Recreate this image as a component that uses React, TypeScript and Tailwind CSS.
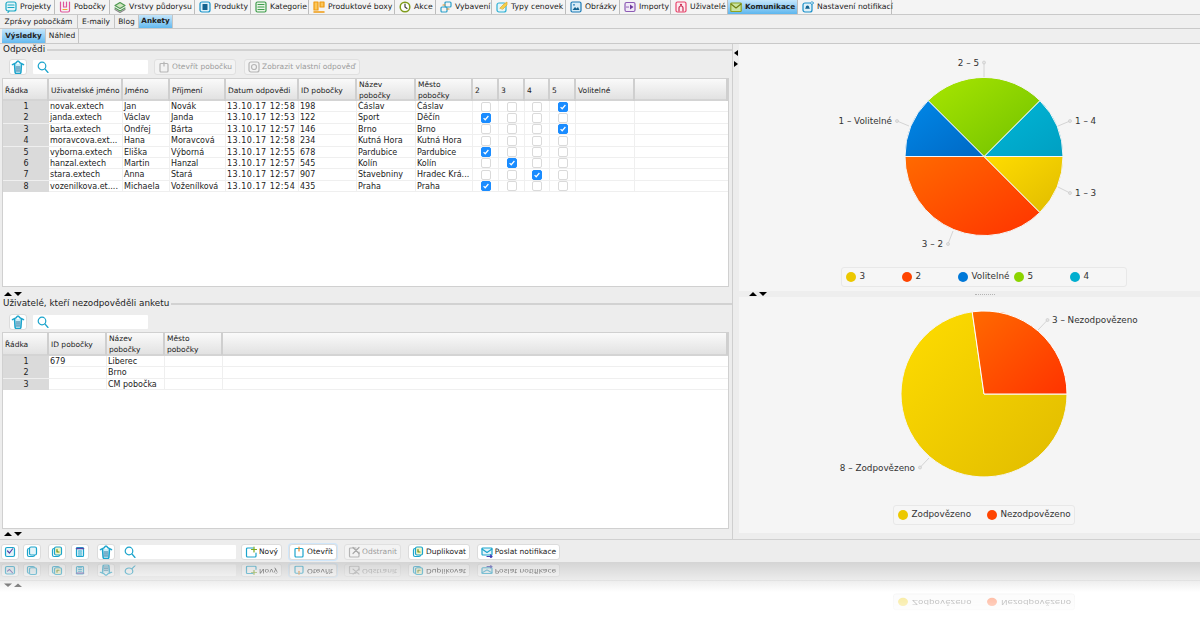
import type { ReactNode } from "react";

const answerCols = "grid grid-cols-[46px_74px_47px_56px_73px_58px_59px_57px_26px_26px_25px_26px_59px_1fr]";
const missingCols = "grid grid-cols-[46px_58px_58px_58px_1fr]";

const answers = [
  ["1", "novak.extech", "Jan", "Novák", "13.10.17 12:58", "198", "Čáslav", "Čáslav", 5],
  ["2", "janda.extech", "Václav", "Janda", "13.10.17 12:53", "122", "Sport", "Děčín", 2],
  ["3", "barta.extech", "Ondřej", "Bárta", "13.10.17 12:57", "146", "Brno", "Brno", 5],
  ["4", "moravcova.ext...", "Hana", "Moravcová", "13.10.17 12:58", "234", "Kutná Hora", "Kutná Hora", 0],
  ["5", "vyborna.extech", "Eliška", "Výborná", "13.10.17 12:55", "678", "Pardubice", "Pardubice", 2],
  ["6", "hanzal.extech", "Martin", "Hanzal", "13.10.17 12:57", "545", "Kolín", "Kolín", 3],
  ["7", "stara.extech", "Anna", "Stará", "13.10.17 12:57", "907", "Stavebniny", "Hradec Krá...", 4],
  ["8", "vozenilkova.et....", "Michaela", "Voženílková", "13.10.17 12:54", "435", "Praha", "Praha", 2],
] as const;

const missing = [
  ["1", "679", "Liberec", ""],
  ["2", "", "Brno", ""],
  ["3", "", "CM pobočka", ""],
];

function Glyph({ children, className = "w-3 h-3" }: { children: ReactNode; className?: string }) {
  return (
    <svg viewBox="0 0 12 12" fill="none" strokeWidth="1.2" strokeLinecap="round" strokeLinejoin="round" className={"shrink-0 " + className}>
      {children}
    </svg>
  );
}

const topTabs = [
  { label: "Projekty", w: "w-[54px]", icon: <><rect x="1" y="1" width="10" height="9" rx="2" fill="#e3f5f9" stroke="#1aa7c4" /><path d="M3 4h6M3 6.500h6" stroke="#1aa7c4" /><path d="M4 10l-1 1.500" stroke="#1aa7c4" /></> },
  { label: "Pobočky", w: "w-[55px]", icon: <><path d="M1.500 1v8.500a1.500 1.500 0 0 0 1.500 1.500h6a1.500 1.500 0 0 0 1.500-1.500V1" stroke="#e0559b" /><path d="M4.500 1v5h3V1" stroke="#e0559b" /><path d="M4 8.500h4" stroke="#f2a33a" /></> },
  { label: "Vrstvy půdorysu", w: "w-[85px]", icon: <><path d="M6 1.500l5 3-5 3-5-3z" fill="#cfe6c0" stroke="#4f9a52" /><path d="M1 7l5 3 5-3" stroke="#4f9a52" /><path d="M1 8.500l5 3 5-3" stroke="#8a8a8a" /></> },
  { label: "Produkty", w: "w-[56px]", icon: <><rect x="1" y="1" width="10" height="10" rx="2" fill="#e0f1f8" stroke="#1a93c9" /><rect x="3.500" y="3" width="5" height="6" rx="0.500" fill="#14628f" /></> },
  { label: "Kategorie", w: "w-[58px]", icon: <><rect x="1" y="1" width="10" height="10" rx="1.500" fill="#e9f5e7" stroke="#3f9c4c" /><path d="M3 3.500h6M3 6h6M3 8.500h6" stroke="#3f9c4c" /></> },
  { label: "Produktové boxy", w: "w-[86px]", icon: <><rect x="1" y="1" width="4" height="8" fill="#fbc65a" stroke="#ef9a10" /><rect x="7" y="1" width="4" height="5" fill="#fbc65a" stroke="#ef9a10" /><path d="M1 11h10" stroke="#ef9a10" strokeWidth="1.500" /></> },
  { label: "Akce", w: "w-[41px]", icon: <><circle cx="6" cy="6" r="4.800" fill="#fff" stroke="#7f9c1c" strokeWidth="1.500" /><path d="M6 3v3l2 1.500" stroke="#444" /></> },
  { label: "Vybavení", w: "w-[56px]", icon: <><rect x="5" y="1" width="6" height="5" rx="1" stroke="#2a9fc9" /><rect x="1" y="6" width="6" height="5" rx="1" stroke="#2a9fc9" /><path d="M3 4h2M9 8H7" stroke="#d98f2b" /></> },
  { label: "Typy cenovek", w: "w-[74px]", icon: <><rect x="1" y="2" width="9" height="9" rx="2" fill="#e3f5f9" stroke="#2fb0d4" /><path d="M4 7l4-4 3-2v3L7 8z" fill="#f5cf4c" stroke="#e0a928" strokeWidth="0.700" /></> },
  { label: "Obrázky", w: "w-[54px]", icon: <><rect x="1" y="1" width="10" height="10" rx="1.500" fill="#d8ecf7" stroke="#1979b5" /><path d="M2.500 9l2.500-3 1.500 1.500L8 6l1.500 3z" fill="#14628f" /><circle cx="4" cy="3.800" r="0.900" fill="#1979b5" /></> },
  { label: "Importy", w: "w-[51px]", icon: <><rect x="1" y="1.500" width="10" height="9" rx="1.500" fill="#f1e9f7" stroke="#8d5bb5" /><path d="M6 3.500l3.500 2.500L6 8.500z" fill="#6d3a9c" /><path d="M2.500 6h2" stroke="#8d5bb5" strokeDasharray="0.800 0.800" /></> },
  { label: "Uživatelé", w: "w-[57px]", icon: <><rect x="1" y="1" width="10" height="10" rx="1.500" fill="#fdeaef" stroke="#e8436b" /><circle cx="6" cy="3.800" r="1.100" fill="#c92b52" /><path d="M4 10V7a2 2 0 0 1 4 0v3" stroke="#c92b52" /></> },
  { label: "Komunikace", w: "w-[70px]", active: true, icon: <><rect x="0.800" y="2" width="10.400" height="8.500" rx="0.800" fill="#c9e4a0" stroke="#8ea21f" /><path d="M1 3l5 4 5-4" stroke="#6f7f12" /></> },
  { label: "Nastavení notifikací", w: "w-[94px]", icon: <><rect x="1" y="2" width="9" height="9" rx="2" fill="#e0f1f8" stroke="#1a8fc9" /><path d="M5.500 4.500c1.300 0 1.800 1 1.800 2.300l.7 1H3l.7-1c0-1.300.5-2.300 1.800-2.300z" fill="#14628f" /><circle cx="10" cy="2" r="1.300" fill="#fff" stroke="#1a8fc9" strokeWidth="0.700" /></> },
];

function MainTabs() {
  return (
    <div className="flex h-[15px] pl-[1px] bg-[#f4f4f4] border-b border-[#c9c9c9]">
      {topTabs.map((t) => (
        <div
          key={t.label}
          className={
            "flex items-center gap-[3px] border-r border-[#bdbdbd] whitespace-nowrap " +
            t.w +
            (t.active ? " pl-[2px] text-[7.3px] bg-gradient-to-b from-[#c4e6fb] to-[#5cb6ee] font-bold" : " pl-[4px] text-[7.7px]")
          }
        >
          <Glyph>{t.icon}</Glyph>
          <span>{t.label}</span>
        </div>
      ))}
    </div>
  );
}

function SubTabs({ items, active, className }: { items: { label: string; w: string }[]; active: string; className: string }) {
  return (
    <div className={"flex bg-[#efefef] border-b border-[#c9c9c9] " + className}>
      {items.map((t) => (
        <div
          key={t.label}
          className={
            "flex items-center justify-center whitespace-nowrap border-r border-[#c4c4c4] " +
            t.w +
            (t.label === active ? " text-[7.2px] bg-gradient-to-b from-[#c4e6fb] to-[#62b9ef] font-bold" : " text-[7.5px]")
          }
        >
          {t.label}
        </div>
      ))}
    </div>
  );
}

function Basket() {
  return (
    <Glyph className="w-[14px] h-[14px]">
      <path d="M3 3.500l.5 7a1 1 0 0 0 1 1h3a1 1 0 0 0 1-1l.5-7" stroke="#1ba4cc" strokeWidth="1.300" fill="#cdeef8" />
      <path d="M1.200 4l3-1.500L5.500 1h1l1.300 1.500 3 1.500" stroke="#1ba4cc" />
      <path d="M4.500 6h3M4.500 7.700h3M4.500 9.400h3" stroke="#1f6f99" strokeWidth="0.800" />
    </Glyph>
  );
}

function IconButton({ children, className = "w-[18px]" }: { children: ReactNode; className?: string }) {
  return (
    <div className={"flex items-center justify-center h-[16px] text-[7.5px] bg-white rounded-[3px] border border-[#dcdcdc] " + className}>
      {children}
    </div>
  );
}

function Search({ className }: { className: string }) {
  return (
    <div className={"flex items-center h-[14px] pl-[4px] bg-white rounded-[1px] " + className}>
      <svg viewBox="0 0 12 12" className="w-[12px] h-[12px]" fill="none" stroke="#1ba4cc" strokeWidth="1.200">
        <circle cx="5" cy="5" r="3.800" />
        <path d="M8 8l3 3.500" strokeLinecap="round" />
      </svg>
    </div>
  );
}

function GroupTitle({ title }: { title: string }) {
  return (
    <div className="flex items-center h-[12px] pl-[3px] text-[8.8px]">
      <span className="pr-[2px]">{title}</span>
      <div className="flex-1 h-[2px] bg-[#d2d2d2]" />
    </div>
  );
}

function HeaderCell({ children }: { children?: ReactNode }) {
  return (
    <div className="flex items-center pl-[2px] text-[7.5px] leading-[11px] border-r-2 border-[#cfcfcf] whitespace-pre-line">
      {children}
    </div>
  );
}

function Check({ on }: { on: boolean }) {
  return (
    <div
      className={
        "flex items-center justify-center w-[10px] h-[10px] rounded-[2px] border " +
        (on ? "bg-[#1a8cff] border-[#1a8cff]" : "bg-white border-[#dadada]")
      }
    >
      {on && (
        <svg viewBox="0 0 10 10" className="w-[8px] h-[8px]" fill="none" stroke="#fff" strokeWidth="1.500">
          <path d="M2 5.200l2 2L8 2.500" />
        </svg>
      )}
    </div>
  );
}

function Cell({ children, last, className = "" }: { children?: ReactNode; last?: boolean; className?: string }) {
  return (
    <div className={"pl-[1px] truncate leading-[11px] " + (last ? "" : "border-r border-[#efefef] ") + className}>{children}</div>
  );
}

function AnswersTable() {
  return (
    <div className="flex-1 ml-[2px] mr-[3px] bg-white border border-[#d0d0d0]">
      <div className={answerCols + " h-[22px] bg-gradient-to-b from-[#fafafa] to-[#e2e2e2] border-b-2 border-[#d4d4d4]"}>
        {["Řádka", "Uživatelské jméno", "Jméno", "Příjmení", "Datum odpovědi", "ID pobočky", "Název\npobočky", "Město\npobočky", "2", "3", "4", "5", "Volitelné", ""].map((h, i) => (
          <HeaderCell key={i}>{h}</HeaderCell>
        ))}
      </div>
      {answers.map((r) => (
        <div key={r[0]} className={answerCols + " h-[11.4px] border-b border-[#efefef]"}>
          <div className="bg-[#dadada] text-center leading-[11px]">{r[0]}</div>
          {r.slice(1, 8).map((v, i) => (
            <Cell key={i} className={i === 3 ? "tracking-[0.5px]" : ""}>{v}</Cell>
          ))}
          {[2, 3, 4, 5].map((n) => (
            <div key={n} className="flex items-center justify-center border-r border-[#efefef]">
              <Check on={r[8] === n} />
            </div>
          ))}
          <Cell />
          <Cell last />
        </div>
      ))}
    </div>
  );
}

function MissingTable() {
  return (
    <div className="flex-1 ml-[2px] mr-[3px] bg-white border border-[#d0d0d0]">
      <div className={missingCols + " h-[23px] bg-gradient-to-b from-[#fafafa] to-[#e2e2e2] border-b-2 border-[#d4d4d4]"}>
        {["Řádka", "ID pobočky", "Název\npobočky", "Město\npobočky", ""].map((h, i) => (
          <HeaderCell key={i}>{h}</HeaderCell>
        ))}
      </div>
      {missing.map((r) => (
        <div key={r[0]} className={missingCols + " h-[11.4px] border-b border-[#efefef]"}>
          <div className="bg-[#dadada] text-center leading-[11px]">{r[0]}</div>
          {r.slice(1).map((v, i) => (
            <Cell key={i}>{v}</Cell>
          ))}
          <Cell last />
        </div>
      ))}
    </div>
  );
}

function DisabledButton({ label, className, icon }: { label: string; className: string; icon: ReactNode }) {
  return (
    <div className={"flex items-center gap-[2px] h-[16px] pl-[3px] text-[7.5px] rounded-[3px] bg-[#f3f3f3] border border-[#e0e0e0] text-[#9c9c9c] " + className}>
      {icon}
      <span className="whitespace-nowrap">{label}</span>
    </div>
  );
}

function VerticalArrows() {
  return (
    <div className="flex gap-[2px] pl-[4px] items-center">
      <div className="w-0 h-0 border-x-[4px] border-x-transparent border-b-[4px] border-b-black" />
      <div className="w-0 h-0 border-x-[4px] border-x-transparent border-t-[4px] border-t-black" />
    </div>
  );
}

function LeftColumn() {
  return (
    <div className="flex flex-col w-[733px] h-full border-r border-[#cfcfcf]">
      <div className="flex flex-col h-[246px]">
        <GroupTitle title="Odpovědi" />
        <div className="flex items-center h-[18px] mt-[2px] pl-[9px] mb-[2px]">
          <IconButton><Basket /></IconButton>
          <Search className="w-[115px] ml-[6px]" />
          <DisabledButton
            label="Otevřít pobočku"
            className="w-[82px] ml-[6px]"
            icon={<Glyph><path d="M3 2.500h6a1 1 0 0 1 1 1V10a1 1 0 0 1-1 1H3a1 1 0 0 1-1-1V3.500a1 1 0 0 1 1-1z" stroke="#b5b5b5" /><path d="M6 1v4" stroke="#b5b5b5" /></Glyph>}
          />
          <DisabledButton
            label="Zobrazit vlastní odpověď"
            className="w-[116px] ml-[8px]"
            icon={<Glyph><rect x="1" y="1" width="10" height="10" rx="2" stroke="#b5b5b5" /><circle cx="6" cy="6" r="2.500" stroke="#b5b5b5" /></Glyph>}
          />
        </div>
        <div className="flex flex-col flex-1 mb-[3px]">
          <AnswersTable />
        </div>
      </div>
      <div className="flex h-[8px]">
        <VerticalArrows />
      </div>
      <GroupTitle title="Uživatelé, kteří nezodpověděli anketu" />
      <div className="flex items-center h-[20px] mt-[2px] pl-[9px]">
        <IconButton><Basket /></IconButton>
        <Search className="w-[115px] ml-[6px]" />
      </div>
      <div className="flex flex-col flex-1">
        <MissingTable />
      </div>
      <div className="flex h-[10px] items-center">
        <VerticalArrows />
      </div>
    </div>
  );
}

function Gradients({ id }: { id: string }) {
  const stops: [string, string, string][] = [
    ["y", "#ffdd00", "#e0bb00"],
    ["o", "#ff6a00", "#ff3300"],
    ["b", "#0088e8", "#0068c4"],
    ["g", "#a8e600", "#70c000"],
    ["t", "#00b8d8", "#009fc2"],
  ];
  return (
    <defs>
      {stops.map(([k, a, b]) => (
        <linearGradient key={k} id={id + k} x1="0" y1="0" x2="1" y2="1">
          <stop offset="0" stopColor={a} />
          <stop offset="1" stopColor={b} />
        </linearGradient>
      ))}
    </defs>
  );
}

function Leader({ points, dot }: { points: string; dot: [number, number] }) {
  return (
    <g>
      <polyline points={points} fill="none" stroke="#d4d4d4" />
      <circle cx={dot[0]} cy={dot[1]} r="1.500" fill="#e4e4e4" stroke="#c4c4c4" strokeWidth="0.600" />
    </g>
  );
}

function ChartText({ x, y, end, children }: { x: number; y: number; end?: boolean; children: string }) {
  return (
    <text x={x} y={y} dominantBaseline="central" textAnchor={end ? "end" : "start"} fill="#333" fontSize="8.8">
      {children}
    </text>
  );
}

function TopPie() {
  return (
    <svg viewBox="768 44 432 223" className="w-[432px] h-[223px] shrink-0">
      <Gradients id="a" />
      <g stroke="#f5f5f5" strokeWidth="1">
        <path d="M984 156.500H905A79 79 0 0 0 1039.900 212.400Z" fill="url(#ao)" />
        <path d="M984 156.500L1039.900 212.400A79 79 0 0 0 1063 156.500Z" fill="url(#ay)" />
        <path d="M984 156.500H1063A79 79 0 0 0 1039.900 100.600Z" fill="url(#at)" />
        <path d="M984 156.500L1039.900 100.600A79 79 0 0 0 928.100 100.600Z" fill="url(#ag)" />
        <path d="M984 156.500L928.100 100.600A79 79 0 0 0 905 156.500Z" fill="url(#ab)" />
      </g>
      <Leader points="984,77 984,63" dot={[984, 62.5]} />
      <ChartText x={979} y={63} end>2 – 5</ChartText>
      <Leader points="909,126 897,121" dot={[897, 121]} />
      <ChartText x={892} y={121} end>1 – Volitelné</ChartText>
      <Leader points="1058,126 1070,121" dot={[1070, 121]} />
      <ChartText x={1075} y={121}>1 – 4</ChartText>
      <Leader points="1058,187 1070,193" dot={[1070, 193]} />
      <ChartText x={1075} y={193}>1 – 3</ChartText>
      <Leader points="953,231 948,244" dot={[948, 244]} />
      <ChartText x={943} y={244} end>3 – 2</ChartText>
    </svg>
  );
}

function BottomPie() {
  return (
    <svg viewBox="768 297 432 208" className="w-[432px] h-[208px] shrink-0">
      <Gradients id="c" />
      <path d="M984 394H1067A83 83 0 1 1 972.200 311.800Z" fill="url(#cy)" stroke="#f5f5f5" />
      <path d="M984 394L972.200 311.800A83 83 0 0 1 1067 394Z" fill="url(#co)" stroke="#fff" />
      <Leader points="1038,330 1047.500,320" dot={[1047.5, 320]} />
      <ChartText x={1052} y={320}>3 – Nezodpovězeno</ChartText>
      <Leader points="929,458 920,467.500" dot={[920, 467.5]} />
      <ChartText x={915} y={468} end>8 – Zodpovězeno</ChartText>
    </svg>
  );
}

function ChartLegend({ items, className, itemClass }: { items: [string, string][]; className: string; itemClass: string }) {
  return (
    <div className={"flex items-center h-[20px] pl-[4px] rounded-[3px] border border-[#e8e8e8] bg-[#f6f6f6] text-[8.8px] text-[#333] " + className}>
      {items.map(([label, color]) => (
        <div key={label} className={"flex items-center gap-[4px] " + itemClass}>
          <span className={"w-[10px] h-[10px] rounded-full " + color} />
          <span>{label}</span>
        </div>
      ))}
    </div>
  );
}

const surveyLegend: [string, string][] = [
  ["3", "bg-[#ecc800]"],
  ["2", "bg-[#ff4400]"],
  ["Volitelné", "bg-[#0078d8]"],
  ["5", "bg-[#8cd400]"],
  ["4", "bg-[#00aecf]"],
];

const answeredLegend: [string, string][] = [
  ["Zodpovězeno", "bg-[#ecc800]"],
  ["Nezodpovězeno", "bg-[#ff4400]"],
];

function AnsweredLegend() {
  return <ChartLegend items={answeredLegend} className="w-[182px]" itemClass="w-[89px] last:w-auto" />;
}

function RightColumn() {
  return (
    <div className="flex flex-col flex-1 h-full">
      <div className="flex flex-col items-center h-[247px] pl-[28px] bg-[#f5f5f5]">
        <TopPie />
        <ChartLegend items={surveyLegend} className="w-[286px]" itemClass="w-[56px]" />
      </div>
      <div className="flex items-center h-[6px] pl-[6px] bg-[#eeeeee]">
        <VerticalArrows />
        <div className="ml-[208px] w-[20px] border-t border-dotted border-[#b4b4b4]" />
      </div>
      <div className="flex flex-col items-center h-[236px] pl-[28px] bg-[#f5f5f5]">
        <BottomPie />
        <AnsweredLegend />
      </div>
    </div>
  );
}

function Gutter() {
  return (
    <div className="flex flex-col items-center gap-[5px] w-[6px] pt-[6px]">
      <div className="w-0 h-0 border-y-[3.5px] border-y-transparent border-r-[4px] border-r-black" />
      <div className="w-0 h-0 border-y-[3.5px] border-y-transparent border-l-[4px] border-l-black" />
    </div>
  );
}

function Footer() {
  return (
    <div className="flex items-center h-[23px] pl-[1px] pt-[2px] bg-[#ededed] border-t border-[#d0d0d0]">
      <IconButton>
        <Glyph><rect x="1.500" y="1.500" width="9" height="9" rx="1.500" fill="#e4f4f9" stroke="#1ba4cc" /><path d="M3.500 5l2 2 3-4" stroke="#5a43a8" /></Glyph>
      </IconButton>
      <IconButton className="w-[18px] ml-[4px]">
        <Glyph><rect x="1.500" y="2.500" width="7" height="8" rx="1.500" stroke="#1ba4cc" /><rect x="3.500" y="1" width="7" height="8" rx="1.500" fill="#e4f4f9" stroke="#1ba4cc" /></Glyph>
      </IconButton>
      <IconButton className="w-[18px] ml-[7px]">
        <Glyph><rect x="1.500" y="2.500" width="7" height="8" rx="1.500" stroke="#1ba4cc" /><rect x="3.500" y="1" width="7" height="8" rx="1.500" fill="#f0f6c8" stroke="#1ba4cc" /><path d="M6 3.500v2.500h2" stroke="#6a8a14" /></Glyph>
      </IconButton>
      <IconButton className="w-[18px] ml-[5px]">
        <Glyph><rect x="2.500" y="1.500" width="7" height="9" rx="1" fill="#e4f4f9" stroke="#1ba4cc" /><path d="M2.500 2.500h7" stroke="#5a43a8" strokeWidth="1.500" /><path d="M4.500 5h3M4.500 7h3M4.500 9h3" stroke="#1ba4cc" /></Glyph>
      </IconButton>
      <IconButton className="w-[18px] ml-[8px]"><Basket /></IconButton>
      <Search className="w-[116px] ml-[5px]" />
      <IconButton className="w-[41px] ml-[5px] gap-[2px]">
        <Glyph><path d="M8 2H2.500a1 1 0 0 0-1 1v7a1 1 0 0 0 1 1H10a1 1 0 0 0 1-1V7" stroke="#1ba4cc" /><path d="M9 1v5M6.500 3.500h5" stroke="#7ba81c" strokeWidth="1.200" /></Glyph>
        <span>Nový</span>
      </IconButton>
      <IconButton className="w-[48px] ml-[7px] gap-[2px] border-[#7fbdf0] shadow-[0_0_0_1px_#cfe6fa]">
        <Glyph><path d="M3 2.500h6a1 1 0 0 1 1 1V10a1 1 0 0 1-1 1H3a1 1 0 0 1-1-1V3.500a1 1 0 0 1 1-1z" stroke="#1ba4cc" /><path d="M6 1v4" stroke="#ef8a24" strokeWidth="1.200" /></Glyph>
        <span>Otevřít</span>
      </IconButton>
      <DisabledButton
        label="Odstranit"
        className="w-[57px] ml-[7px]"
        icon={<Glyph><path d="M8 2H2.500a1 1 0 0 0-1 1v7a1 1 0 0 0 1 1H10a1 1 0 0 0 1-1V6" stroke="#b5b5b5" /><path d="M5 1.500l6 6M11 1.500l-6 6" stroke="#a8a8a8" /></Glyph>}
      />
      <IconButton className="w-[62px] ml-[7px] gap-[2px]">
        <Glyph><rect x="1.500" y="2.500" width="7" height="8" rx="1.500" stroke="#1ba4cc" /><rect x="3.500" y="1" width="7" height="8" rx="1.500" fill="#f0f6c8" stroke="#1ba4cc" /><path d="M6 3.500v2.500h2" stroke="#6a8a14" /></Glyph>
        <span>Duplikovat</span>
      </IconButton>
      <IconButton className="w-[83px] ml-[7px] gap-[2px]">
        <Glyph><rect x="1" y="2" width="10" height="7" rx="0.800" fill="#e4f4f9" stroke="#1ba4cc" /><path d="M1 3l5 3.500L11 3" stroke="#1ba4cc" /><path d="M6 10.500h5M9.500 9l1.500 1.500L9.500 12" stroke="#3f3fb5" /></Glyph>
        <span className="whitespace-nowrap">Poslat notifikace</span>
      </IconButton>
    </div>
  );
}

function Reflection() {
  return (
    <div className="relative flex-1 overflow-hidden bg-white">
      <div className="absolute top-0 inset-x-0 h-[18px] bg-gradient-to-b from-[#bcbcbc] to-[#ececec]" />
      <div className="absolute top-[18px] inset-x-0 h-[12px] bg-gradient-to-b from-[#ececec] to-white" />
      <div className="absolute inset-0 [mask-image:linear-gradient(to_bottom,black,black_30%,transparent)] opacity-50">
        <div className="absolute left-0 bottom-full w-[1200px] origin-bottom [transform:scaleY(-0.83)] flex flex-col" aria-hidden="true">
          <div className="flex h-[40px]">
            <div className="flex flex-col w-[733px]">
              <div className="flex-1" />
              <div className="flex h-[10px] items-center">
                <VerticalArrows />
              </div>
            </div>
            <div className="flex flex-col items-center flex-1 pl-[35px] pt-[5px]">
              <AnsweredLegend />
            </div>
          </div>
          <Footer />
        </div>
      </div>
    </div>
  );
}

export default function App() {
  return (
    <div className="flex flex-col w-[1200px] h-[630px] overflow-hidden bg-white text-[#222] text-[8px] font-['DejaVu_Sans',sans-serif]">
      <div className="flex flex-col h-[562px] bg-[#ededed]">
        <MainTabs />
        <SubTabs
          className="h-[14px]"
          active="Ankety"
          items={[
            { label: "Zprávy pobočkám", w: "w-[78px]" },
            { label: "E-maily", w: "w-[37px]" },
            { label: "Blog", w: "w-[24px]" },
            { label: "Ankety", w: "w-[34px]" },
          ]}
        />
        <SubTabs
          className="h-[15px] pl-[2px]"
          active="Výsledky"
          items={[
            { label: "Výsledky", w: "w-[44px]" },
            { label: "Náhled", w: "w-[33px]" },
          ]}
        />
        <div className="flex h-[495px]">
          <LeftColumn />
          <Gutter />
          <RightColumn />
        </div>
        <Footer />
      </div>
      <Reflection />
    </div>
  );
}
